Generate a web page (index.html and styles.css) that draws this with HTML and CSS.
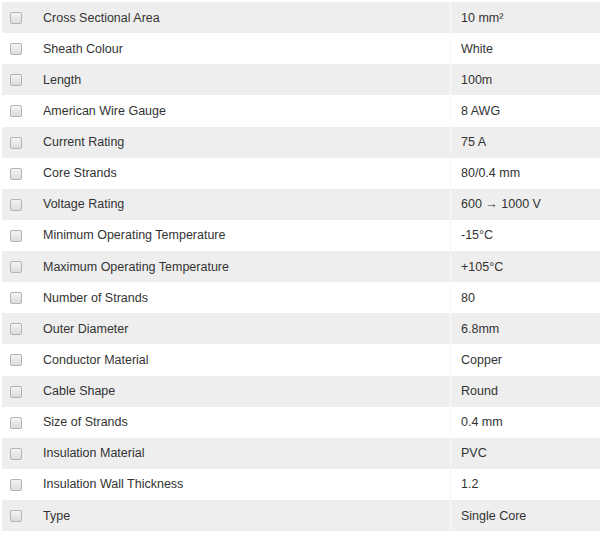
FILE: index.html
```html
<!DOCTYPE html>
<html>
<head>
<meta charset="utf-8">
<link rel="stylesheet" href="styles.css">
</head>
<body>
<table class="specs">
<tbody>
<tr><td class="c"><span class="box"></span></td><td class="n">Cross Sectional Area</td><td class="v">10 mm²</td></tr>
<tr><td class="c"><span class="box"></span></td><td class="n">Sheath Colour</td><td class="v">White</td></tr>
<tr><td class="c"><span class="box"></span></td><td class="n">Length</td><td class="v">100m</td></tr>
<tr><td class="c"><span class="box"></span></td><td class="n">American Wire Gauge</td><td class="v">8 AWG</td></tr>
<tr><td class="c"><span class="box"></span></td><td class="n">Current Rating</td><td class="v">75 A</td></tr>
<tr><td class="c"><span class="box"></span></td><td class="n">Core Strands</td><td class="v">80/0.4 mm</td></tr>
<tr><td class="c"><span class="box"></span></td><td class="n">Voltage Rating</td><td class="v">600 → 1000 V</td></tr>
<tr><td class="c"><span class="box"></span></td><td class="n">Minimum Operating Temperature</td><td class="v">-15°C</td></tr>
<tr><td class="c"><span class="box"></span></td><td class="n">Maximum Operating Temperature</td><td class="v">+105°C</td></tr>
<tr><td class="c"><span class="box"></span></td><td class="n">Number of Strands</td><td class="v">80</td></tr>
<tr><td class="c"><span class="box"></span></td><td class="n">Outer Diameter</td><td class="v">6.8mm</td></tr>
<tr><td class="c"><span class="box"></span></td><td class="n">Conductor Material</td><td class="v">Copper</td></tr>
<tr><td class="c"><span class="box"></span></td><td class="n">Cable Shape</td><td class="v">Round</td></tr>
<tr><td class="c"><span class="box"></span></td><td class="n">Size of Strands</td><td class="v">0.4 mm</td></tr>
<tr><td class="c"><span class="box"></span></td><td class="n">Insulation Material</td><td class="v">PVC</td></tr>
<tr><td class="c"><span class="box"></span></td><td class="n">Insulation Wall Thickness</td><td class="v">1.2</td></tr>
<tr><td class="c"><span class="box"></span></td><td class="n">Type</td><td class="v">Single Core</td></tr>
</tbody>
</table>
</body>
</html>
```
FILE: styles.css
```css
html, body {
  margin: 0;
  padding: 0;
  background: #ffffff;
}
body {
  padding: 2px 0 0 2px;
  font-family: "Liberation Sans", Arial, sans-serif;
  font-size: 12.5px;
  color: #333333;
}
.specs {
  width: 598px;
  border-collapse: collapse;
  table-layout: fixed;
}
.specs tr {
  height: 31.125px;
}
.specs tr:nth-child(odd) {
  background: #eeeeee;
}
.specs td {
  padding: 0;
  vertical-align: middle;
  white-space: nowrap;
}
.c {
  width: 30px;
}
.n {
  width: 407px;
  padding-left: 11px !important;
}
.v {
  padding-left: 10px !important;
  border-left: 1px solid #f8f8f8;
}
.box {
  display: block;
  width: 10px;
  height: 10px;
  margin: 1px 0 0 8px;
  border: 1px solid #b4b4b4;
  border-radius: 2px;
  background: linear-gradient(#f4f4f4, #dcdcdc);
}
```
